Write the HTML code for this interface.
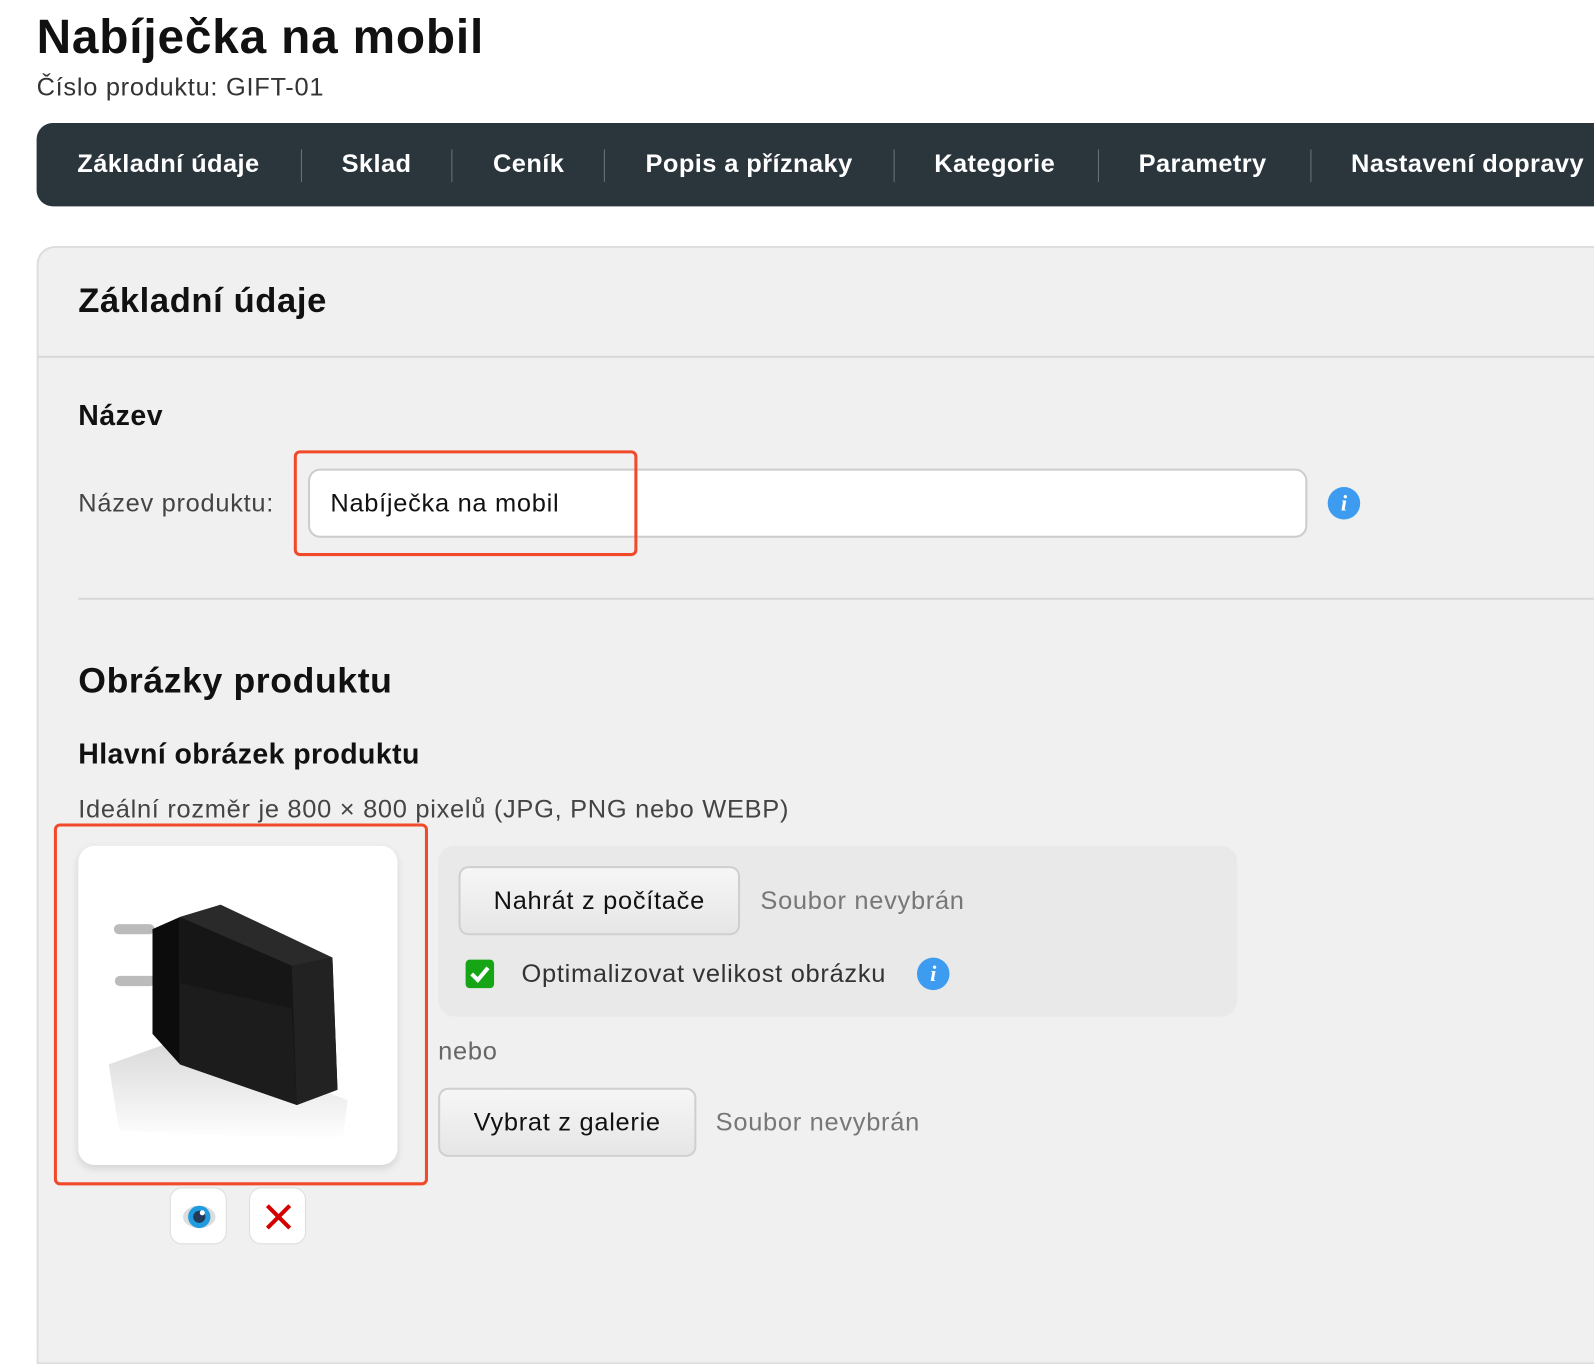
<!DOCTYPE html>
<html><head><meta charset="utf-8"><style>
*{box-sizing:border-box;margin:0;padding:0}
body{width:1594px;height:1312px;overflow:hidden;background:#fff;font-family:"Liberation Sans",sans-serif;color:#111;position:relative}
#w{position:absolute;left:0;top:0;width:1568px;height:1300px;transform:scale(1.0166);transform-origin:0 0}
.a{position:absolute;white-space:nowrap}
.t{letter-spacing:0.7px}
.nav{position:absolute;left:36px;top:121px;width:1600px;height:82px;background:#2b353c;border-radius:16px 0 0 16px}
.nav span{position:absolute;top:26px;color:#fff;font-weight:bold;font-size:25px;letter-spacing:0.4px}
.sep{position:absolute;top:26px;width:1px;height:32px;background:#6a747a}
.card{position:absolute;left:36px;top:242px;width:1600px;height:1100px;background:#f0f0f0;border:2px solid #ddd;border-right:none;border-radius:18px 0 0 0}
.btn{position:absolute;background:linear-gradient(#f6f6f6,#e6e6e6);border:2px solid #cfcfcf;border-radius:10px;font-size:25px;letter-spacing:0.7px;color:#111;display:flex;align-items:center;justify-content:center}
.info{position:absolute;width:32px;height:32px;border-radius:50%;background:#3d9cf0;color:#fff;font:italic bold 22px "Liberation Serif",serif;text-align:center;line-height:32px}
.red{position:absolute;border:3px solid #f04a2b;border-radius:6px}
.sq{position:absolute;width:56px;height:56px;background:#fff;border:1px solid #ddd;border-radius:12px}
</style></head><body><div id="w">
<div class="a" style="left:36px;top:8px;font-size:47px;font-weight:bold;letter-spacing:0.8px">Nabíječka na mobil</div>
<div class="a t" style="left:36px;top:72px;font-size:25px;color:#333">Číslo produktu: GIFT-01</div>
<div class="nav">
<span style="left:40px">Základní údaje</span><div class="sep" style="left:260px"></div>
<span style="left:300px">Sklad</span><div class="sep" style="left:408px"></div>
<span style="left:449px">Ceník</span><div class="sep" style="left:558px"></div>
<span style="left:599px">Popis a příznaky</span><div class="sep" style="left:843px"></div>
<span style="left:883px">Kategorie</span><div class="sep" style="left:1044px"></div>
<span style="left:1084px">Parametry</span><div class="sep" style="left:1253px"></div>
<span style="left:1293px">Nastavení dopravy</span>
</div>
<div class="card"></div>
<div class="a" style="left:37px;top:350px;width:1600px;height:2px;background:#d8d8d8"></div>
<div class="a" style="left:77px;top:277px;font-size:34px;font-weight:bold;letter-spacing:0.6px">Základní údaje</div>
<div class="a" style="left:77px;top:393px;font-size:28px;font-weight:bold;letter-spacing:0.5px">Název</div>
<div class="a t" style="left:77px;top:481px;font-size:25px;color:#444">Název produktu:</div>
<div class="a" style="left:303px;top:461px;width:983px;height:68px;background:#fff;border:2px solid #ccc;border-radius:12px"></div>
<div class="a t" style="left:325px;top:481px;font-size:25px">Nabíječka na mobil</div>
<div class="red" style="left:289px;top:443px;width:338px;height:104px"></div>
<div class="info" style="left:1306px;top:479px">i</div>
<div class="a" style="left:77px;top:588px;width:1600px;height:2px;background:#d8d8d8"></div>
<div class="a" style="left:77px;top:650px;font-size:35px;font-weight:bold;letter-spacing:0.6px">Obrázky produktu</div>
<div class="a" style="left:77px;top:726px;font-size:28px;font-weight:bold;letter-spacing:0.4px">Hlavní obrázek produktu</div>
<div class="a t" style="left:77px;top:782px;font-size:25px;color:#444">Ideální rozměr je 800 × 800 pixelů (JPG, PNG nebo WEBP)</div>
<div class="a" style="left:77px;top:832px;width:314px;height:314px;background:#fff;border-radius:16px;box-shadow:0 3px 8px rgba(0,0,0,.12)">
<svg width="314" height="314" viewBox="0 0 314 314">
<defs><linearGradient id="g" x1="0" y1="0" x2="0" y2="1"><stop offset="0" stop-color="#d8d8d8"/><stop offset="1" stop-color="#fff"/></linearGradient></defs>
<polygon points="30,215 100,190 265,250 260,290 40,280" fill="url(#g)"/>
<rect x="35" y="77" width="40" height="10" rx="5" fill="#bbb"/><rect x="36" y="128" width="40" height="10" rx="5" fill="#bbb"/>
<polygon points="73,82 100,70 100,215 73,185" fill="#0c0c0c"/>
<polygon points="100,70 140,58 250,110 255,240 215,255 100,215" fill="#161616"/>
<polygon points="100,70 140,58 250,110 210,118" fill="#2a2a2a"/>
<polygon points="210,118 250,110 255,240 215,255" fill="#222"/>
<polygon points="100,135 210,160 215,255 100,215" fill="#1c1c1c"/>
</svg></div>
<div class="red" style="left:53px;top:810px;width:368px;height:356px"></div>
<div class="sq" style="left:167px;top:1168px"><svg width="56" height="56"><ellipse cx="28" cy="28" rx="16" ry="11" fill="#ddd"/><circle cx="28" cy="28" r="11" fill="#1f9be0"/><circle cx="28" cy="28" r="6" fill="#243a5a"/><circle cx="31" cy="24" r="2.5" fill="#fff"/></svg></div>
<div class="sq" style="left:245px;top:1168px"><svg width="56" height="56"><path d="M17 17L39 39M39 17L17 39" stroke="#d40000" stroke-width="4"/></svg></div>
<div class="a" style="left:431px;top:832px;width:786px;height:168px;background:#e9e9e9;border-radius:16px"></div>
<div class="btn" style="left:451px;top:852px;width:277px;height:68px">Nahrát z počítače</div>
<div class="a t" style="left:748px;top:872px;font-size:25px;color:#777">Soubor nevybrán</div>
<div class="a" style="left:458px;top:944px;width:28px;height:28px;background:#15a515;border-radius:4px"><svg width="28" height="28"><path d="M6 14l6 6 10-12" stroke="#fff" stroke-width="4" fill="none"/></svg></div>
<div class="a t" style="left:513px;top:944px;font-size:25px;color:#333">Optimalizovat velikost obrázku</div>
<div class="info" style="left:902px;top:942px">i</div>
<div class="a t" style="left:431px;top:1020px;font-size:25px;color:#666">nebo</div>
<div class="btn" style="left:431px;top:1070px;width:254px;height:68px">Vybrat z galerie</div>
<div class="a t" style="left:704px;top:1090px;font-size:25px;color:#777">Soubor nevybrán</div>
</div></body></html>
